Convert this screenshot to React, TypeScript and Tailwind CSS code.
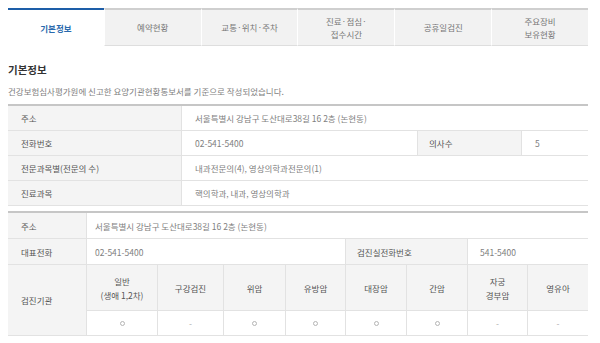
import React from 'react';

const tabs = [
  { label: ['기본정보'], active: true },
  { label: ['예약현황'] },
  { label: ['교통·위치·주차'] },
  { label: ['진료·점심·', '접수시간'] },
  { label: ['공휴일검진'] },
  { label: ['주요장비', '보유현황'] },
];

const basicRows = [
  { label: '주소', value: '서울특별시 강남구 도산대로38길 16 2층 (논현동)' },
  { label: '전화번호', value: '02-541-5400', extraLabel: '의사수', extraValue: '5' },
  { label: '전문과목별(전문의 수)', value: '내과전문의(4), 영상의학과전문의(1)' },
  { label: '진료과목', value: '핵의학과, 내과, 영상의학과' },
];

const checkups = [
  { name: ['일반', '(생애 1,2차)'], ok: true },
  { name: ['구강검진'], ok: false },
  { name: ['위암'], ok: true },
  { name: ['유방암'], ok: true },
  { name: ['대장암'], ok: true },
  { name: ['간암'], ok: true },
  { name: ['자궁', '경부암'], ok: false },
  { name: ['영유아'], ok: false },
];

const cell = 'box-border flex items-center border-b border-r border-[#e2e2e2]';

export default function App() {
  return (
    <div
      className="w-[600px] h-[343px] overflow-hidden bg-white text-[8.5px] leading-[12px] text-[#666] pl-[8px] pt-[8px]"
      style={{ fontFamily: '"Noto Sans CJK KR", "Noto Sans", sans-serif' }}
    >
      <div className="w-[580px]">
        {/* Tabs */}
        <div className="flex h-[38px]">
          {tabs.map((tab, i) => (
            <div
              key={i}
              className={
                tab.active
                  ? 'box-border flex-1 flex flex-col items-center justify-center border-t-2 border-[#1d5ea8] bg-white text-[#2a69ad] font-bold'
                  : 'box-border flex-1 flex flex-col items-center justify-center border-t-2 border-t-[#cfcfcf] border-b border-b-[#dedede] border-l border-l-white bg-[#f2f2f2] text-[#777]'
              }
            >
              {tab.label.map((l) => (
                <span key={l} className="leading-[13px]">
                  {l}
                </span>
              ))}
            </div>
          ))}
        </div>

        {/* Heading */}
        <h2 className="mt-[17px] text-[10.5px] leading-[14px] font-bold text-[#333]">기본정보</h2>
        <p className="mt-[8px] text-[#808080]">건강보험심사평가원에 신고한 요양기관현황통보서를 기준으로 작성되었습니다.</p>

        {/* Basic info table */}
        <div className="mt-[7px] border-t-2 border-[#c6c6c6]">
          {basicRows.map((row) => (
            <div key={row.label} className="box-border flex h-[25px] border-b border-[#e2e2e2]">
              <div className="w-[174px] flex items-center bg-[#f4f4f4] border-r border-[#e2e2e2] pl-[13px] text-[#555]">
                {row.label}
              </div>
              <div className="w-[235px] flex items-center pl-[13px] text-[#808080] whitespace-nowrap">{row.value}</div>
              {row.extraLabel ? (
                <>
                  <div className="w-[105px] flex items-center bg-[#f4f4f4] border-x border-[#e2e2e2] pl-[11px] text-[#555]">
                    {row.extraLabel}
                  </div>
                  <div className="flex-1 flex items-center pl-[13px] text-[#808080]">{row.extraValue}</div>
                </>
              ) : (
                <div className="flex-1" />
              )}
            </div>
          ))}
        </div>

        {/* Checkup table */}
        <div className="mt-[5px] border-t-2 border-[#c6c6c6] grid grid-cols-[79px_71px_66px_62px_60px_61px_61px_60px_60px] grid-rows-[26px_26px_46px_25px]">
          <div className={`${cell} bg-[#f4f4f4] pl-[13px] text-[#555]`}>주소</div>
          <div className={`${cell} col-span-8 border-r-0 pl-[8px] text-[#808080]`}>
            서울특별시 강남구 도산대로38길 16 2층 (논현동)
          </div>

          <div className={`${cell} bg-[#f4f4f4] pl-[13px] text-[#555]`}>대표전화</div>
          <div className={`${cell} col-span-4 pl-[8px] text-[#808080]`}>02-541-5400</div>
          <div className={`${cell} col-span-2 bg-[#f4f4f4] pl-[11px] text-[#555]`}>검진실전화번호</div>
          <div className={`${cell} col-span-2 border-r-0 pl-[12px] text-[#808080]`}>541-5400</div>

          <div className={`${cell} row-span-2 bg-[#f4f4f4] pl-[13px] text-[#555]`}>검진기관</div>
          {checkups.map((c, i) => (
            <div
              key={c.name.join()}
              className={`${cell} flex-col justify-center bg-[#f4f4f4] text-[#555] ${i === checkups.length - 1 ? 'border-r-0' : ''}`}
            >
              {c.name.map((n) => (
                <span key={n} className="leading-[14px]">
                  {n}
                </span>
              ))}
            </div>
          ))}
          {checkups.map((c, i) => (
            <div
              key={'v' + c.name.join()}
              className={`${cell} justify-center text-[#aaa] ${i === checkups.length - 1 ? 'border-r-0' : ''}`}
            >
              {c.ok ? <span className="block w-[5px] h-[5px] rounded-full border border-[#b5b5b5]" /> : '-'}
            </div>
          ))}
        </div>

        <p className="mt-[5px] pl-[13px] text-[#999] whitespace-nowrap">
          ※ 검진기관 정보는 국민건강보험공단에 등록된 검진기관 현황을 기준으로 작성되었습니다.
        </p>
      </div>
    </div>
  );
}
